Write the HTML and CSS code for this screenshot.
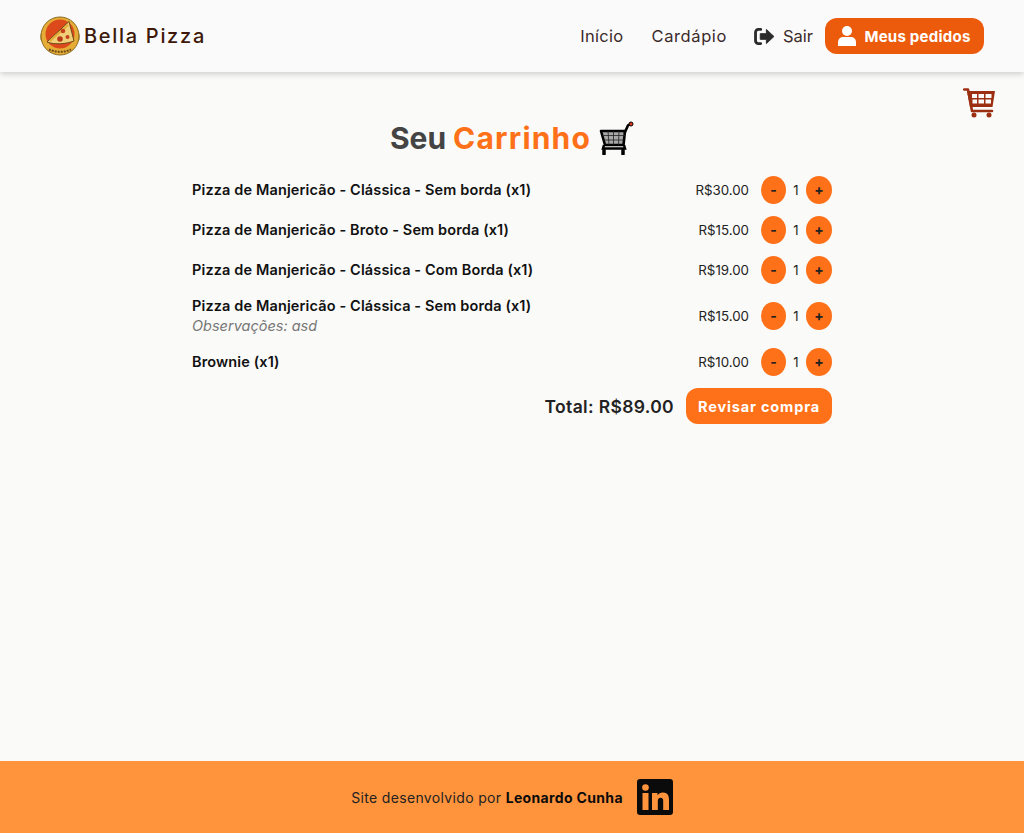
FILE: index.html
```html
<!DOCTYPE html>
<html>
<head>
  <title>Bella Pizza</title>
  <link rel="stylesheet" href="styles.css">
</head>
<body>
  <header class="navbar">
    <a class="brand">
      <svg class="brand-logo" viewBox="0 0 40 40">
        <rect x="0.500" y="17" width="39" height="8" rx="2" fill="#8a6a22"/>
        <circle cx="20" cy="20" r="19" fill="#e5ad35" stroke="#8a6a22" stroke-width="1"/>
        <circle cx="20" cy="18" r="14.500" fill="#dc4a1c"/>
        <path d="M7 26L29 5.500L34 25C26 28 15 29 7 26Z" fill="#f0cf78" stroke="#6e4a1a" stroke-width="1" stroke-linejoin="round"/>
        <path d="M10 25L28 9" stroke="#e5ad35" stroke-width="2"/>
        <circle cx="23" cy="15" r="2.300" fill="#c2401c"/>
        <circle cx="20" cy="23" r="2.800" fill="#b5391a"/>
        <circle cx="27.500" cy="21" r="2" fill="#c2401c"/>
        <path d="M9 33.500C15 36.500 25 36.500 31 33.500" fill="none" stroke="#6e4a1a" stroke-width="2" stroke-dasharray="2 1"/>
      </svg>
      <span class="brand-name">Bella Pizza</span>
    </a>
    <nav class="nav-links">
      <a>Início</a>
      <a class="nav-menu">Cardápio</a>
      <a class="nav-exit">
        <svg class="exit-icon" viewBox="0 0 22 18">
          <path d="M7 1.500H4.500A3 3 0 0 0 1.500 4.500V13.500A3 3 0 0 0 4.500 16.500H7" fill="none" stroke="#2b2b2b" stroke-width="3" stroke-linecap="round"/>
          <path d="M6.500 6H13V1.500L21 9L13 16.500V12H6.500Z" fill="#2b2b2b" stroke="#2b2b2b" stroke-width="1" stroke-linejoin="round"/>
        </svg>
        Sair
      </a>
      <a class="orders-btn">
        <svg class="user-icon" viewBox="0 0 18 20">
          <circle cx="9" cy="5" r="5" fill="#fff"/>
          <path d="M0 20V16A5 5 0 0 1 5 11H13A5 5 0 0 1 18 16V20Z" fill="#fff"/>
        </svg>
        Meus pedidos
      </a>
    </nav>
  </header>

  <a class="floating-cart">
    <svg viewBox="0 0 32 30" width="32" height="30">
      <path d="M1.200 1.500H5L9 23H29" fill="none" stroke="#9c2f12" stroke-width="2.600" stroke-linecap="round" stroke-linejoin="round"/>
      <path fill-rule="evenodd" d="M4 3H32L29.500 19H7ZM9 6V10H14V6ZM15.500 6V10H21V6ZM22.500 6V10H28.500V6ZM9.500 11.500V15.500H14V11.500ZM15.500 11.500V15.500H21V11.500ZM22.500 11.500V15.500H28V11.500Z" fill="#9c2f12"/>
      <circle cx="11" cy="27" r="2.500" fill="#9c2f12"/>
      <circle cx="26" cy="27" r="2.500" fill="#9c2f12"/>
    </svg>
  </a>

  <main class="cart">
    <h1 class="cart-title">
      <span class="title-dark">Seu</span> <span class="title-orange">Carrinho</span>
      <svg class="title-cart" viewBox="0 0 36 34">
        <path d="M3 10H27L25.500 24H7Z" fill="#a8a8a8" stroke="#000" stroke-width="2.600" stroke-linejoin="round"/>
        <path d="M4 14.500H27M5 19H26M10 10L11 24M15.500 10V24M21 10L20.500 24" stroke="#222" stroke-width="0.800"/>
        <path d="M27 11L30 4.500L32.500 3" fill="none" stroke="#000" stroke-width="2.600" stroke-linecap="round"/>
        <path d="M6 24L5 27.500H27L26 24" fill="none" stroke="#000" stroke-width="2.500"/>
        <path d="M6 33V29M25 33V29" stroke="#000" stroke-width="3.500" stroke-linecap="round"/>
        <circle cx="33" cy="3" r="2" fill="#e8391c" stroke="#000" stroke-width="1"/>
      </svg>
    </h1>

    <ul class="cart-list">
      <li class="cart-item">
        <div class="item-info"><span class="item-name">Pizza de Manjericão - Clássica - Sem borda (x1)</span></div>
        <span class="item-price">R$30.00</span>
        <div class="qty"><button class="qty-btn qty-minus">-</button><span class="qty-num">1</span><button class="qty-btn">+</button></div>
      </li>
      <li class="cart-item">
        <div class="item-info"><span class="item-name">Pizza de Manjericão - Broto - Sem borda (x1)</span></div>
        <span class="item-price">R$15.00</span>
        <div class="qty"><button class="qty-btn qty-minus">-</button><span class="qty-num">1</span><button class="qty-btn">+</button></div>
      </li>
      <li class="cart-item">
        <div class="item-info"><span class="item-name">Pizza de Manjericão - Clássica - Com Borda (x1)</span></div>
        <span class="item-price">R$19.00</span>
        <div class="qty"><button class="qty-btn qty-minus">-</button><span class="qty-num">1</span><button class="qty-btn">+</button></div>
      </li>
      <li class="cart-item">
        <div class="item-info">
          <span class="item-name">Pizza de Manjericão - Clássica - Sem borda (x1)</span>
          <span class="item-note">Observações: asd</span>
        </div>
        <span class="item-price">R$15.00</span>
        <div class="qty"><button class="qty-btn qty-minus">-</button><span class="qty-num">1</span><button class="qty-btn">+</button></div>
      </li>
      <li class="cart-item">
        <div class="item-info"><span class="item-name">Brownie (x1)</span></div>
        <span class="item-price">R$10.00</span>
        <div class="qty"><button class="qty-btn qty-minus">-</button><span class="qty-num">1</span><button class="qty-btn">+</button></div>
      </li>
    </ul>

    <div class="cart-total">
      <span class="total-text">Total: R$89.00</span>
      <button class="review-btn">Revisar compra</button>
    </div>
  </main>

  <footer class="footer">
    <span>Site desenvolvido por <strong>Leonardo Cunha</strong></span>
    <svg class="linkedin" viewBox="0 0 36 36">
      <rect width="36" height="36" rx="3" fill="#0b0b0b"/>
      <circle cx="8.500" cy="8.500" r="3.300" fill="#ff943c"/>
      <rect x="5.500" y="14" width="6" height="17" fill="#ff943c"/>
      <path d="M15 14H20.500V16.500C21.500 14.800 23.500 13.600 26 13.600C30.500 13.600 32 16.500 32 21V31H26.200V22C26.200 20 25.600 18.700 23.600 18.700C21.600 18.700 20.800 20.200 20.800 22V31H15Z" fill="#ff943c"/>
    </svg>
  </footer>
</body>
</html>
```

FILE: styles.css
```css
* {
  box-sizing: border-box;
}

html, body {
  height: 100%;
}

body {
  margin: 0;
  min-height: 833px;
  display: flex;
  flex-direction: column;
  position: relative;
  font-family: 'Inter', 'Noto Sans', sans-serif;
  background-color: #fafaf8;
  color: #111;
}

.navbar {
  height: 72px;
  flex-shrink: 0;
  display: flex;
  align-items: center;
  justify-content: space-between;
  padding: 0 40px;
  background-color: #fafafa;
  box-shadow: 0 2px 6px rgba(0, 0, 0, 0.18);
}

.brand {
  display: flex;
  align-items: center;
  gap: 4px;
}

.brand-logo {
  width: 40px;
  height: 40px;
}

.brand-name {
  font-size: 20px;
  font-weight: 500;
  letter-spacing: 1.7px;
  color: #3d1808;
}

.nav-links {
  display: flex;
  align-items: center;
  font-size: 16.500px;
  letter-spacing: 0.3px;
  color: #3a2a2a;
}

.nav-links a {
  display: flex;
  align-items: center;
  margin-left: 28px;
}

.nav-links .nav-menu {
  letter-spacing: 0.6px;
}

.nav-links .nav-exit {
  gap: 8px;
  margin-left: 27px;
  letter-spacing: 0;
}

.exit-icon {
  width: 21px;
  height: 17px;
}

.nav-links .orders-btn {
  margin-left: 12px;
  height: 36px;
  width: 159px;
  justify-content: center;
  gap: 8px;
  background-color: #ec5b0c;
  border-radius: 12px;
  color: #fff;
  font-size: 15px;
  font-weight: 700;
  letter-spacing: 0.25px;
}

.user-icon {
  width: 18px;
  height: 20px;
}

.floating-cart {
  position: absolute;
  top: 88px;
  left: 963px;
}

.cart {
  flex: 1;
  width: 640px;
  margin: 0 auto;
}

.cart-title {
  margin: 46px 0 0;
  height: 40px;
  display: flex;
  align-items: center;
  justify-content: center;
  gap: 7px;
  font-size: 30px;
  font-weight: 700;
}

.title-dark {
  color: #444;
}

.title-orange {
  color: #ff7119;
  letter-spacing: 1.2px;
}

.title-cart {
  width: 36px;
  height: 34px;
}

.cart-list {
  list-style: none;
  margin: 0;
  padding: 18px 0 0;
}

.cart-item {
  display: flex;
  align-items: center;
  margin-bottom: 12px;
}

.item-info {
  flex: 1;
  display: flex;
  flex-direction: column;
}

.item-name {
  font-size: 14.500px;
  font-weight: 600;
  letter-spacing: 0.13px;
  line-height: 20px;
  color: #111;
}

.item-note {
  font-size: 14.500px;
  font-style: italic;
  line-height: 20px;
  color: #777;
}

.item-price {
  font-size: 13.300px;
  color: #222;
  margin-right: 12px;
}

.qty {
  display: flex;
  align-items: center;
}

.qty-btn {
  width: 26px;
  height: 28px;
  padding: 0 0 2px;
  border: none;
  border-radius: 50%;
  background-color: #ff7119;
  color: #222;
  font-family: inherit;
  font-size: 14px;
  font-weight: 700;
}

.qty-minus {
  width: 25px;
}

.qty-num {
  width: 20px;
  text-align: center;
  font-size: 13px;
  color: #222;
}

.cart-total {
  display: flex;
  align-items: center;
  justify-content: flex-end;
  gap: 12px;
}

.total-text {
  font-size: 17.500px;
  font-weight: 600;
  letter-spacing: 0.35px;
  color: #222;
}

.review-btn {
  width: 146px;
  height: 36px;
  border: none;
  border-radius: 12px;
  background-color: #ff7119;
  color: #fff;
  font-family: inherit;
  font-size: 14.500px;
  font-weight: 700;
  letter-spacing: 0.85px;
}

.footer {
  height: 72px;
  flex-shrink: 0;
  display: flex;
  align-items: center;
  justify-content: center;
  gap: 14px;
  background-color: #ff943c;
  font-size: 14px;
  letter-spacing: 0.34px;
  color: #222;
}

.footer strong {
  color: #0b0b0b;
}

.linkedin {
  width: 36px;
  height: 36px;
}
```
